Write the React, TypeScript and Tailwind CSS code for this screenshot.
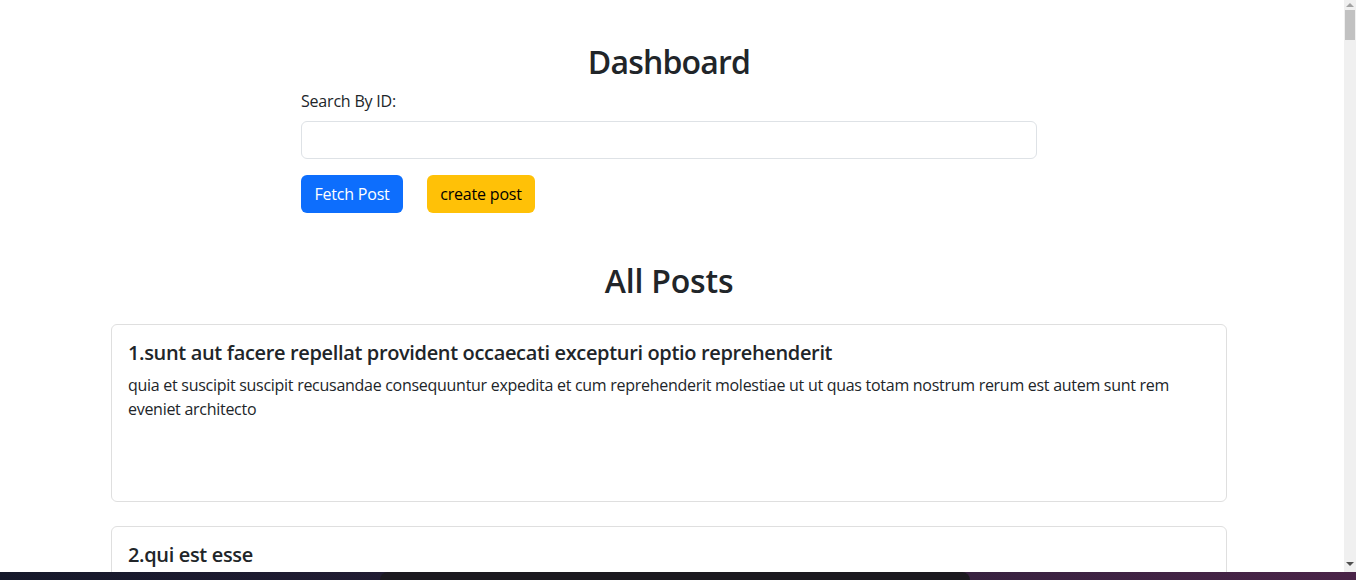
const posts = [
  {
    id: 1,
    title: "sunt aut facere repellat provident occaecati excepturi optio reprehenderit",
    body: "quia et suscipit suscipit recusandae consequuntur expedita et cum reprehenderit molestiae ut ut quas totam nostrum rerum est autem sunt rem eveniet architecto",
  },
  {
    id: 2,
    title: "qui est esse",
    body: "est rerum tempore vitae sequi sint nihil reprehenderit dolor beatae ea dolores neque fugiat blanditiis voluptate porro vel nihil molestiae ut reiciendis qui aperiam non debitis possimus qui neque nisi nulla",
  },
];

const Scrollbar = () => (
  <div className="w-[12px] h-full bg-[#f0f0f0] flex flex-col items-center shrink-0">
    <div className="h-[10px] flex items-center justify-center">
      <div className="w-0 h-0 border-l-[4px] border-r-[4px] border-b-[4px] border-l-transparent border-r-transparent border-b-[#a3a3a3]" />
    </div>
    <div className="w-[10px] h-[30px] bg-[#c1c1c1]" />
    <div className="flex-1" />
    <div className="h-[20px] flex items-start justify-center pt-[2px]">
      <div className="w-0 h-0 border-l-[4px] border-r-[4px] border-t-[4px] border-l-transparent border-r-transparent border-t-[#505050]" />
    </div>
  </div>
);

export default function App() {
  return (
    <div
      className="flex h-[580px] overflow-hidden bg-white text-[#212529]"
      style={{ fontFamily: '"Open Sans", "Noto Sans", sans-serif' }}
    >
      <div className="flex-1 overflow-hidden">
        <div className="w-[1140px] ml-[99px] px-[12px] pt-[43px]">
          {/* Search */}
          <div className="w-[736px] mx-auto">
            <h2 className="text-center text-[32px] leading-[38px] font-semibold mb-[8px] tracking-[-0.8px]">
              Dashboard
            </h2>
            <label className="block text-[16px] leading-[24px] mb-[8px] tracking-[-0.2px]">Search By ID:</label>
            <input
              type="text"
              className="block w-full h-[38px] border border-[#dee2e6] rounded-[6px] px-[12px] outline-none"
            />
            <div className="flex gap-[24px] mt-[16px]">
              <button className="h-[38px] w-[102px] bg-[#0d6efd] text-white rounded-[6px] text-[16px] tracking-[-0.2px]">
                Fetch Post
              </button>
              <button className="h-[38px] w-[108px] bg-[#ffc107] text-black rounded-[6px] text-[16px] tracking-[-0.2px]">
                create post
              </button>
            </div>
          </div>

          {/* Posts */}
          <h2 className="text-center text-[32px] leading-[38px] font-semibold mt-[49px] mb-[24px] tracking-[-0.2px]">
            All Posts
          </h2>
          <div className="flex flex-col gap-[24px]">
            {posts.map((p) => (
              <div
                key={p.id}
                className="h-[178px] border border-[#dfdfdf] rounded-[6px] p-[16px] shrink-0"
              >
                <h5 className="text-[20px] leading-[24px] font-semibold mb-[8px] tracking-[-0.35px]">
                  {p.id}.{p.title}
                </h5>
                <p className="text-[16px] leading-[24px] tracking-[-0.28px]">{p.body}</p>
              </div>
            ))}
          </div>
        </div>
      </div>
      <Scrollbar />

      {/* desktop taskbar strip */}
      <div className="fixed bottom-0 left-0 right-0 h-[8px] flex bg-gradient-to-r from-[#15182a] via-[#2a1f3a] to-[#4a2448]">
        <div className="ml-[380px] w-[590px] h-full bg-[#1b191f] rounded-t-[10px]" />
      </div>
    </div>
  );
}
